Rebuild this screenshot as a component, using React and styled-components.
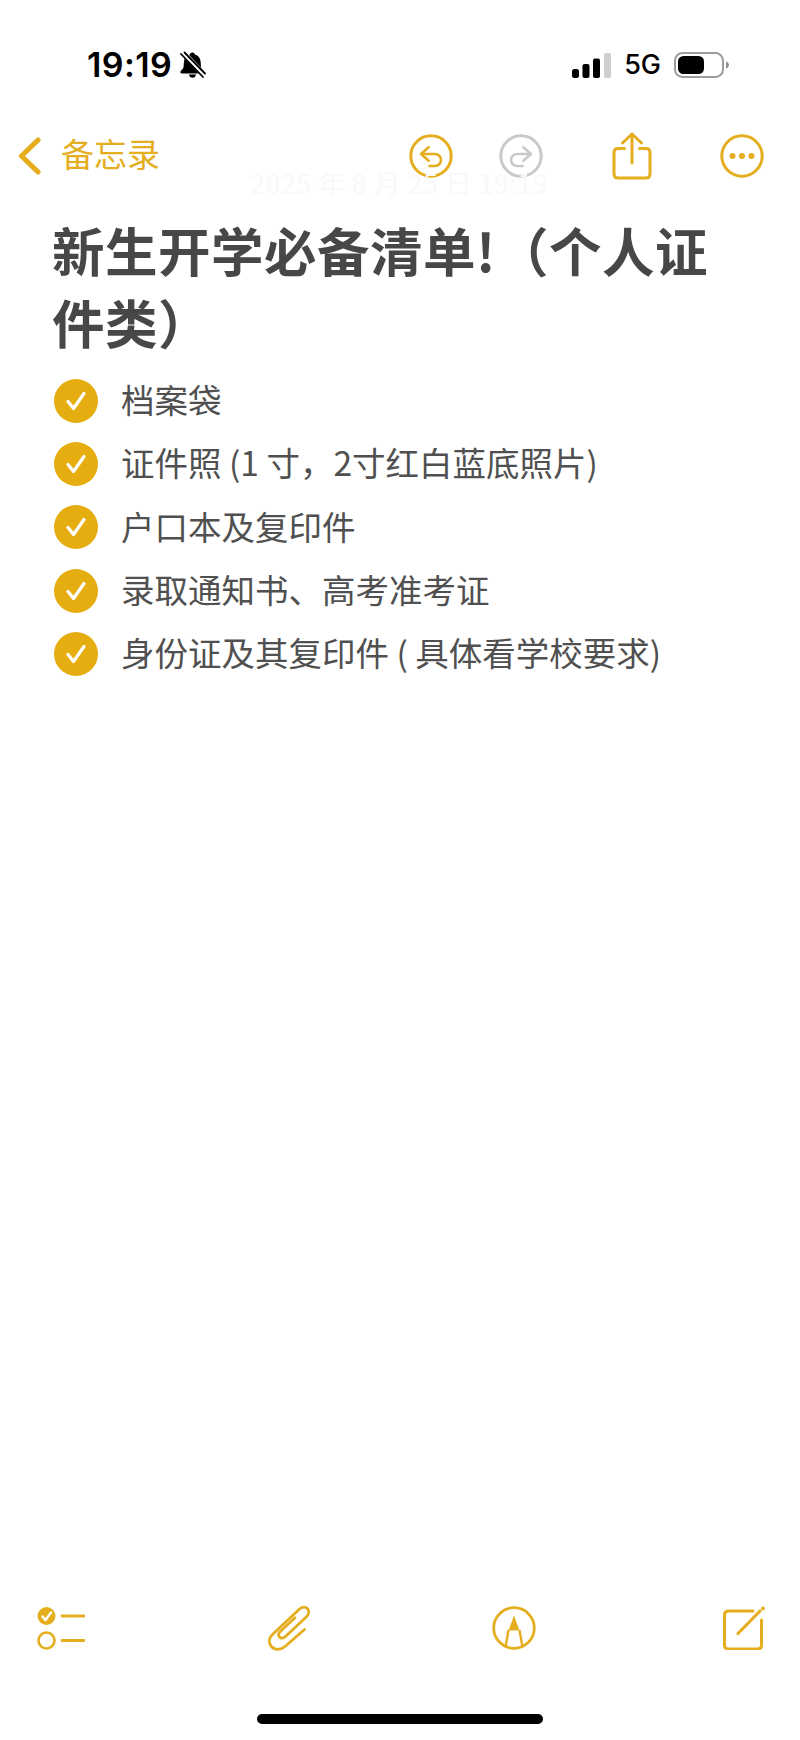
import React from 'react';
import styled, { createGlobalStyle } from 'styled-components';

const GOLD = '#e4ae1f';
const CJK = '"Noto Sans CJK SC", "Noto Sans", sans-serif';

const GlobalStyle = createGlobalStyle`
    html, body {
        margin: 0;
        padding: 0;
        background: #fff;
    }
`;

const Page = styled.div`
    width: 800px;
    height: 1740px;
    display: flex;
    flex-direction: column;
    overflow: hidden;
    background: #fff;
    font-family: ${CJK};
`;

// Status bar
const StatusBar = styled.div`
    height: 50px;
    margin-top: 40px;
    padding: 0 70px 0 87px;
    display: flex;
    align-items: center;
    justify-content: space-between;
    color: #000;
`;

const StatusGroup = styled.div`
    display: flex;
    align-items: center;
    gap: ${(p) => p.$gap}px;
`;

const Time = styled.span`
    font-family: Inter, "Liberation Sans", sans-serif;
    font-size: 34px;
    font-weight: 600;
    line-height: 50px;
    letter-spacing: 0.4px;
`;

const Network = styled.span`
    font-family: Inter, "Liberation Sans", sans-serif;
    font-size: 27px;
    font-weight: 500;
    line-height: 50px;
`;

// Nav bar
const Header = styled.div`
    position: relative;
    height: 60px;
    margin-top: 36px;
    padding: 0 36px 0 18px;
    display: flex;
    align-items: center;
    justify-content: space-between;
`;

const FadedDate = styled.div`
    position: absolute;
    left: 250px;
    top: 40px;
    font-size: 27px;
    line-height: 34px;
    letter-spacing: 0.4px;
    color: #f9f9f9;
    white-space: nowrap;
`;

const BackLink = styled.div`
    display: flex;
    align-items: center;
    gap: 20px;
    color: ${GOLD};
    font-size: 33px;
    line-height: 44px;
`;

const BackLabel = styled.span`
    padding-bottom: 6px;
`;

const Actions = styled.div`
    display: flex;
    align-items: center;
`;

const ActionSlot = styled.div`
    width: 44px;
    height: 48px;
    margin-left: ${(p) => p.$offset || 0}px;
    display: flex;
    align-items: center;
    justify-content: center;
`;

// Note body
const Note = styled.main`
    flex: 1;
    padding: 27px 40px 0 52px;
`;

const Title = styled.h1`
    margin: 0 0 12px;
    font-size: 52.5px;
    font-weight: 700;
    line-height: 72px;
    letter-spacing: 0.5px;
    color: #474747;
`;

const ChecklistRow = styled.div`
    height: 63.3px;
    margin-left: 2px;
    display: flex;
    align-items: center;
    gap: 23px;
    font-size: 33.5px;
    color: #505050;
    white-space: nowrap;
`;

const RowText = styled.span`
    padding-bottom: 4px;
`;

const CheckCircle = styled.div`
    width: 44px;
    height: 44px;
    border-radius: 50%;
    background: #e5ad10;
    display: flex;
    align-items: center;
    justify-content: center;
    flex-shrink: 0;
`;

// Bottom toolbar
const Toolbar = styled.div`
    padding: 0 35px 0 37px;
    margin-bottom: 62px;
    height: 48px;
    display: flex;
    align-items: center;
    justify-content: space-between;
`;

const HomeBar = styled.div`
    width: 286px;
    height: 10px;
    margin: 0 auto 16px;
    border-radius: 5px;
    background: #000;
`;

const SilentBell = () => (
    <svg width="29" height="28" viewBox="0 0 27 28">
        <path d="M13.5 1.5c1.3 0 2.2.9 2.4 2 3.6 1 5.6 4 5.8 7.8l.3 4.6c.1 1.7 2.6 3.2 3.2 5 .2 1-.4 1.6-1.5 1.6H3c-1.3 0-1.9-.7-1.6-1.7.6-1.6 3-3 3.2-5l.3-4.6c.2-4 2.2-6.8 5.9-7.8.3-1.1 1.3-1.9 2.7-1.9z" fill="#000" />
        <path d="M10 23.5h7c-.2 2-1.7 3.3-3.5 3.3S10.2 25.5 10 23.5z" fill="#000" />
        <path d="M3.5 1l22.5 24" stroke="#fff" strokeWidth="5.5" />
        <path d="M2 3l22 23" stroke="#000" strokeWidth="1.8" strokeLinecap="round" />
        <path d="M5.5 1.5L26 22.5" stroke="#000" strokeWidth="1.8" strokeLinecap="round" />
    </svg>
);

const SignalBars = () => (
    <svg width="39" height="25" viewBox="0 0 39 25">
        <rect x="0" y="16" width="7" height="9" rx="2.5" fill="#000" />
        <rect x="10.5" y="11" width="7" height="14" rx="2" fill="#000" />
        <rect x="21" y="5.5" width="7" height="19.5" rx="2" fill="#000" />
        <rect x="32" y="0" width="7" height="25" rx="2" fill="#cfcfcf" />
    </svg>
);

const Battery = () => (
    <svg width="56" height="26" viewBox="0 0 56 26">
        <rect x="1" y="1" width="48" height="24" rx="7.5" fill="none" stroke="#9c9c9c" strokeWidth="2" />
        <rect x="4" y="4" width="26" height="18" rx="5.5" fill="#000" />
        <path d="M52 9.5c1.8.6 3 2 3 3.5s-1.2 2.9-3 3.5z" fill="#8f8f8f" />
    </svg>
);

const Chevron = () => (
    <svg width="23" height="38" viewBox="0 0 23 38" fill="none">
        <path d="M20 3L3.5 19 20 35" stroke={GOLD} strokeWidth="5.2" strokeLinecap="round" strokeLinejoin="round" />
    </svg>
);

const Undo = ({ color, flip }) => (
    <svg width="44" height="44" viewBox="0 0 44 44" fill="none" stroke={color} strokeLinecap="round" strokeLinejoin="round">
        <circle cx="22" cy="22" r="20.2" strokeWidth="3" />
        <g transform={flip ? 'matrix(-1 0 0 1 44 0)' : undefined} strokeWidth="2.6">
            <path d="M19.7 13.3L12 20l7.7 6.7" />
            <path d="M12.5 20H26c3.2 0 6 2.6 6 6s-2.8 6-6 6h-5.5" />
        </g>
    </svg>
);

const Share = () => (
    <svg width="40" height="48" viewBox="0 0 40 48" fill="none" stroke={GOLD} strokeWidth="3" strokeLinecap="round" strokeLinejoin="round">
        <path d="M12.5 16.5H6c-2.5 0-4 1.5-4 4V42c0 2.5 1.5 4 4 4h28c2.5 0 4-1.5 4-4V20.5c0-2.5-1.5-4-4-4h-6.500" />
        <path d="M20 31V2" />
        <path d="M10.5 11L20 2l9.5 9" />
    </svg>
);

const More = () => (
    <svg width="44" height="44" viewBox="0 0 44 44" fill="none">
        <circle cx="22" cy="22" r="20.2" stroke={GOLD} strokeWidth="3" />
        <circle cx="12.5" cy="22" r="3" fill={GOLD} />
        <circle cx="22" cy="22" r="3" fill={GOLD} />
        <circle cx="31.5" cy="22" r="3" fill={GOLD} />
    </svg>
);

const Tick = () => (
    <svg width="24" height="22" viewBox="0 0 24 22" fill="none">
        <path d="M4 11.5l5.5 7L20 3.5" stroke="#fff" strokeWidth="3.2" strokeLinecap="round" strokeLinejoin="round" />
    </svg>
);

const ChecklistIcon = () => (
    <svg width="48" height="44" viewBox="0 0 48 44" fill="none">
        <circle cx="9.5" cy="10" r="9" fill={GOLD} />
        <path d="M5.5 10.5l3 3.5 5.5-7.5" stroke="#fff" strokeWidth="2.4" strokeLinecap="round" strokeLinejoin="round" />
        <circle cx="9.5" cy="34.5" r="8" stroke={GOLD} strokeWidth="2.6" />
        <path d="M25 10h22M25 34.5h22" stroke={GOLD} strokeWidth="2.8" strokeLinecap="round" />
    </svg>
);

const Clip = () => (
    <svg width="42" height="46" viewBox="0 0 42 46" fill="none" stroke={GOLD} strokeWidth="2.8" strokeLinecap="round" strokeLinejoin="round">
        <path d="M36.5 24.5L17 41.5c-4.5 4-10.5 3.5-13.5 0S.5 33 5 29L31 4.5c3-2.8 6.5-3 8.5-.8s1.5 5.8-1.5 8.6L17.5 31.5c-2 1.8-4.5 2-6 .6s-1-4 1-5.8l14.5-13.5" />
    </svg>
);

const Markup = () => (
    <svg width="48" height="44" viewBox="0 0 48 44" fill="none">
        <circle cx="22" cy="22" r="20.3" stroke={GOLD} strokeWidth="2.8" />
        <path d="M22 9.5l5.5 15h-11z" fill={GOLD} />
        <path d="M16.5 24l-3 17M27.5 24l3 17" stroke={GOLD} strokeWidth="2.4" />
    </svg>
);

const Compose = () => (
    <svg width="42" height="44" viewBox="0 0 42 44" fill="none">
        <path d="M30 5H5.5C3 5 1.5 6.5 1.5 9v30c0 2.5 1.5 4 4 4h29c2.5 0 4-1.5 4-4V14" stroke={GOLD} strokeWidth="3" strokeLinecap="round" />
        <path d="M15 27.5L37 5" stroke={GOLD} strokeWidth="3.2" strokeLinecap="round" />
        <circle cx="40" cy="2.5" r="2" fill={GOLD} />
    </svg>
);

const items = [
    '档案袋',
    '证件照 (1 寸，2寸红白蓝底照片)',
    '户口本及复印件',
    '录取通知书、高考准考证',
    '身份证及其复印件 ( 具体看学校要求)',
];

const App = () => (
    <Page>
        <GlobalStyle />
        <StatusBar>
            <StatusGroup $gap={6}>
                <Time>19:19</Time>
                <SilentBell />
            </StatusGroup>
            <StatusGroup $gap={13}>
                <SignalBars />
                <Network>5G</Network>
                <Battery />
            </StatusGroup>
        </StatusBar>

        <Header>
            <FadedDate>2025 年 8 月 25 日 19:19</FadedDate>
            <BackLink>
                <Chevron />
                <BackLabel>备忘录</BackLabel>
            </BackLink>
            <Actions>
                <ActionSlot><Undo color={GOLD} /></ActionSlot>
                <ActionSlot $offset={46}><Undo color="#c9c9c9" flip /></ActionSlot>
                <ActionSlot $offset={67}><Share /></ActionSlot>
                <ActionSlot $offset={66}><More /></ActionSlot>
            </Actions>
        </Header>

        <Note>
            <Title>新生开学必备清单!（个人证件类）</Title>
            {items.map((text) => (
                <ChecklistRow key={text}>
                    <CheckCircle><Tick /></CheckCircle>
                    <RowText>{text}</RowText>
                </ChecklistRow>
            ))}
        </Note>

        <Toolbar>
            <ChecklistIcon />
            <Clip />
            <Markup />
            <Compose />
        </Toolbar>
        <HomeBar />
    </Page>
);

export default App;
